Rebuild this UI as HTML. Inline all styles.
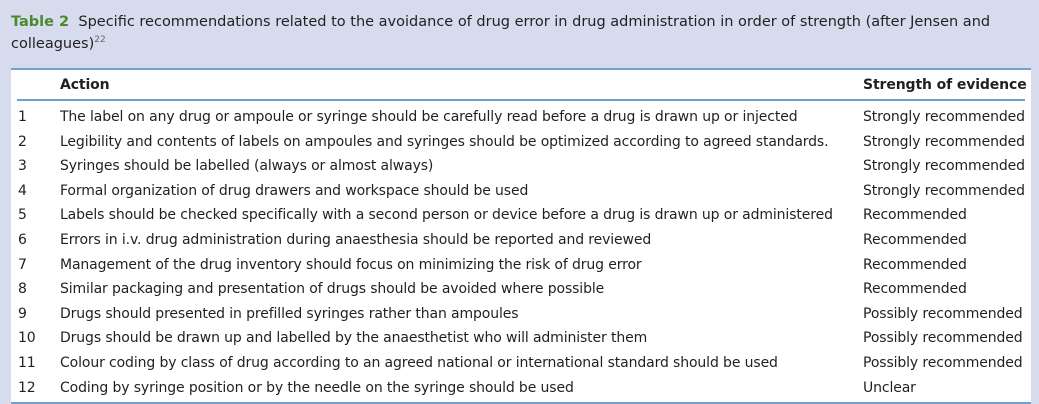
<!DOCTYPE html>
<html><head><style>
body{margin:0;width:1039px;height:403px;background:#d6dced;font-family:"DejaVu Sans","Liberation Sans",sans-serif;color:#231f20;overflow:hidden;position:relative}
.t{position:absolute;left:11px;top:11px;font-size:14.5px;line-height:22px;width:1020px}
.t b{color:#4a8a2c}
.t sup{font-size:9px;color:#666;vertical-align:6px;line-height:0}
.p{position:absolute;left:11px;top:68px;width:1020px;height:332px;background:#fff;border-top:2px solid #6fa0d3;border-bottom:2px solid #6fa0d3}
.h{position:absolute;top:0;left:6px;right:6px;height:29px;border-bottom:2px solid #6fa0d3;font-weight:bold}
.r,.h{font-size:14px;letter-spacing:-0.12px}
.c{position:absolute;white-space:nowrap}
</style></head><body>
<div class="t"><b>Table 2</b>&nbsp; Specific recommendations related to the avoidance of drug error in drug administration in order of strength (after Jensen and colleagues)<sup>22</sup></div>
<div class="p">
<div class="h"><span class="c" style="left:43px;top:7px">Action</span><span class="c" style="left:846px;top:7px">Strength of evidence</span></div>
<div id="rows"></div>
</div>
<script>
var d=[["The label on any drug or ampoule or syringe should be carefully read before a drug is drawn up or injected","Strongly recommended"],
["Legibility and contents of labels on ampoules and syringes should be optimized according to agreed standards.","Strongly recommended"],
["Syringes should be labelled (always or almost always)","Strongly recommended"],
["Formal organization of drug drawers and workspace should be used","Strongly recommended"],
["Labels should be checked specifically with a second person or device before a drug is drawn up or administered","Recommended"],
["Errors in i.v. drug administration during anaesthesia should be reported and reviewed","Recommended"],
["Management of the drug inventory should focus on minimizing the risk of drug error","Recommended"],
["Similar packaging and presentation of drugs should be avoided where possible","Recommended"],
["Drugs should presented in prefilled syringes rather than ampoules","Possibly recommended"],
["Drugs should be drawn up and labelled by the anaesthetist who will administer them","Possibly recommended"],
["Colour coding by class of drug according to an agreed national or international standard should be used","Possibly recommended"],
["Coding by syringe position or by the needle on the syringe should be used","Unclear"]];
var h="";d.forEach(function(x,i){var y=39+i*24.6;h+='<span class="c r" style="left:7px;top:'+y+'px">'+(i+1)+'</span><span class="c r" style="left:49px;top:'+y+'px">'+x[0]+'</span><span class="c r" style="left:852px;top:'+y+'px">'+x[1]+'</span>';});
document.getElementById("rows").innerHTML=h;
</script>
</body></html>
